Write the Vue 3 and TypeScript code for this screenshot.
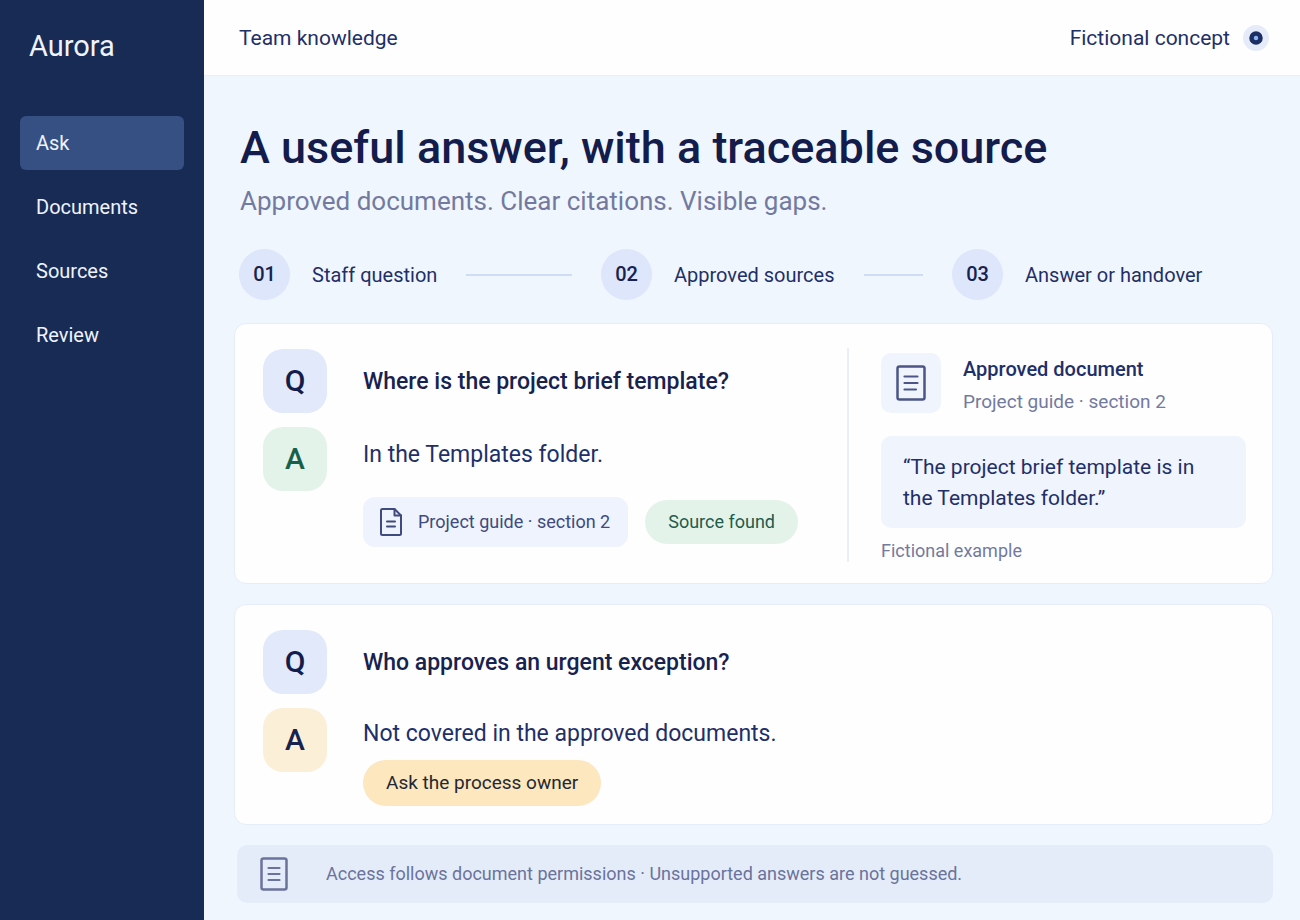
<script setup lang="ts">
interface NavItem {
  label: string
  active: boolean
}

interface Step {
  number: string
  label: string
}

const navItems: NavItem[] = [
  { label: 'Ask', active: true },
  { label: 'Documents', active: false },
  { label: 'Sources', active: false },
  { label: 'Review', active: false },
]

const steps: Step[] = [
  { number: '01', label: 'Staff question' },
  { number: '02', label: 'Approved sources' },
  { number: '03', label: 'Answer or handover' },
]
</script>

<template>
  <div class="app">
    <aside class="sidebar">
      <div class="brand">Aurora</div>
      <nav class="nav" aria-label="Main">
        <a
          v-for="item in navItems"
          :key="item.label"
          href="#"
          class="nav-link"
          :class="{ active: item.active }"
          :aria-current="item.active ? 'page' : undefined"
        >{{ item.label }}</a>
      </nav>
    </aside>

    <div class="main">
      <header class="topbar">
        <span>Team knowledge</span>
        <div class="topbar-right">
          <span>Fictional concept</span>
          <button type="button" class="dot" aria-label="Account">
            <svg viewBox="0 0 26 26" width="26" height="26" aria-hidden="true">
              <circle cx="13" cy="13" r="13" fill="#e6ebfa" />
              <circle cx="13" cy="13" r="4.500" fill="#8fb4f0" stroke="#1b2f66" stroke-width="4.500" />
            </svg>
          </button>
        </div>
      </header>

      <main class="content">
        <div class="intro">
          <h1>A useful answer, with a traceable source</h1>
          <p>Approved documents. Clear citations. Visible gaps.</p>
        </div>

        <ol class="steps">
          <li v-for="step in steps" :key="step.number" class="step">
            <span class="step-number">{{ step.number }}</span>
            <span class="step-label">{{ step.label }}</span>
          </li>
        </ol>

        <section class="card with-source">
          <div class="thread">
            <div class="row">
              <span class="badge question">Q</span>
              <h2 class="question-text">Where is the project brief template?</h2>
            </div>
            <div class="row">
              <span class="badge found">A</span>
              <div class="answer">
                <p class="answer-text">In the Templates folder.</p>
                <div class="chips">
                  <a href="#" class="source-chip">
                    <svg viewBox="0 0 24 30" width="24" height="30" fill="none" stroke="currentColor" stroke-width="2" stroke-linecap="round" stroke-linejoin="round" aria-hidden="true">
                      <path d="M3.500 2H15.500L22 8.500V26.500Q22 28 20.500 28H3.500Q2 28 2 26.500V3.500Q2 2 3.500 2Z" />
                      <path d="M15.500 2V8.500H22M8 14.500H16M8 19.500H16" />
                    </svg>
                    <span>Project guide · section 2</span>
                  </a>
                  <span class="status">Source found</span>
                </div>
              </div>
            </div>
          </div>

          <aside class="source">
            <div class="source-head">
              <span class="source-icon">
                <svg viewBox="0 0 32 38" width="32" height="38" fill="none" stroke="currentColor" stroke-linecap="round" aria-hidden="true">
                  <rect x="2.500" y="2.500" width="27" height="33" rx="2" stroke-width="2.500" />
                  <path d="M9.500 12.500H22.500M9.500 19H22.500M9.500 25.500H21" stroke-width="2.200" />
                </svg>
              </span>
              <div>
                <h3>Approved document</h3>
                <p class="muted">Project guide · section 2</p>
              </div>
            </div>
            <blockquote>“The project brief template is in the Templates folder.”</blockquote>
            <p class="muted example">Fictional example</p>
          </aside>
        </section>

        <section class="card">
          <div class="thread compact">
            <div class="row">
              <span class="badge question">Q</span>
              <h2 class="question-text">Who approves an urgent exception?</h2>
            </div>
            <div class="row">
              <span class="badge gap">A</span>
              <div class="answer">
                <p class="answer-text">Not covered in the approved documents.</p>
                <button type="button" class="handover">Ask the process owner</button>
              </div>
            </div>
          </div>
        </section>

        <footer class="notice">
          <svg viewBox="0 0 30 36" width="30" height="36" fill="none" stroke="currentColor" stroke-linecap="round" aria-hidden="true">
            <rect x="2.500" y="2.500" width="25" height="31" rx="2" stroke-width="2.500" />
            <path d="M9.500 12H20.500M9.500 18H20.500M9.500 24H20.500" stroke-width="2.200" />
          </svg>
          <span>Access follows document permissions · Unsupported answers are not guessed.</span>
        </footer>
      </main>
    </div>
  </div>
</template>

<style>
body {
  margin: 0;
}
</style>

<style scoped>
.app {
  display: grid;
  grid-template-columns: 204px minmax(0, 1fr);
  min-height: 100vh;
  background: #f0f6fe;
  color: #1f2f68;
  font-family: Roboto, "Liberation Sans", sans-serif;
  font-size: 20px;
  line-height: 30px;
}

.app *,
.app {
  box-sizing: border-box;
}

h1,
h2,
h3,
p,
ol,
blockquote {
  margin: 0;
  padding: 0;
}

svg {
  display: block;
  flex: none;
}

.sidebar {
  padding: 26px 20px;
  background: #182b54;
  color: #eef3fd;
}

.brand {
  padding-left: 9px;
  font-size: 29px;
  line-height: 40px;
}

.nav {
  display: grid;
  gap: 10px;
  margin-top: 50px;
}

.nav-link {
  padding: 0 16px;
  border-radius: 6px;
  color: inherit;
  line-height: 54px;
  text-decoration: none;
}

.nav-link.active {
  background: #365084;
}

.topbar {
  display: flex;
  align-items: center;
  justify-content: space-between;
  height: 76px;
  padding: 0 31px 0 35px;
  border-bottom: 1px solid #e9eff9;
  background: #fefefe;
  font-size: 21px;
}

.topbar-right {
  display: flex;
  align-items: center;
  gap: 13px;
}

.dot {
  padding: 0;
  border: 0;
  background: none;
}

.content {
  padding: 42px 27px 16px 30px;
}

.intro {
  padding-left: 6px;
}

h1 {
  color: #131c4b;
  font-size: 45px;
  font-weight: 500;
  line-height: 60px;
}

.intro p {
  margin-top: 3px;
  color: #737a9f;
  font-size: 26px;
  line-height: 40px;
}

.steps {
  display: grid;
  grid-template-columns: 362fr 351fr 321fr;
  margin: 28px 0 23px;
  padding-left: 5px;
  list-style: none;
}

.step {
  display: flex;
  align-items: center;
}

.step-number {
  width: 51px;
  margin-right: 22px;
  border-radius: 50%;
  background: #dde6fb;
  color: #17224f;
  font-weight: 500;
  line-height: 51px;
  text-align: center;
}

.step:not(:last-child)::after {
  content: "";
  flex: 1;
  height: 2px;
  margin: 0 29px;
  background: #d0dbf5;
}

.card {
  margin-bottom: 20px;
  border: 1px solid #e6edf9;
  border-radius: 12px;
  background: #fefefe;
}

.with-source {
  display: grid;
  grid-template-columns: minmax(0, 612fr) minmax(0, 425fr);
}

.thread {
  display: grid;
  align-content: start;
  gap: 12px;
  padding: 25px 28px 36px;
}

.row {
  display: flex;
  gap: 36px;
}

.badge {
  flex: none;
  width: 64px;
  height: 64px;
  border-radius: 20px;
  font-size: 30px;
  font-weight: 500;
  line-height: 64px;
  text-align: center;
}

.question {
  background: #e1e9fa;
  color: #131c4b;
}

.found {
  background: #e4f3e9;
  color: #17604a;
}

.gap {
  background: #fcefd8;
  color: #17224f;
}

.question-text {
  color: #17224f;
  font-size: 23px;
  font-weight: 500;
  line-height: 66px;
}

.answer-text {
  font-size: 23px;
  line-height: 56px;
}

.chips {
  display: flex;
  align-items: center;
  gap: 17px;
  margin-top: 14px;
}

.source-chip {
  display: flex;
  align-items: center;
  gap: 15px;
  height: 50px;
  padding: 0 18px 0 16px;
  border-radius: 12px;
  background: #eef3fd;
  color: #3f4a7d;
  font-size: 18px;
  text-decoration: none;
  white-space: nowrap;
}

.status {
  padding: 0 23px;
  border-radius: 22px;
  background: #e4f3e9;
  color: #1d5c4c;
  font-size: 18px;
  line-height: 44px;
  white-space: nowrap;
}

.source {
  margin: 24px 26px 21px 0;
  padding: 5px 0 0 32px;
  border-left: 2px solid #e8effa;
}

.source-head {
  display: flex;
  gap: 22px;
}

.source-icon {
  display: grid;
  place-items: center;
  width: 60px;
  height: 60px;
  border-radius: 10px;
  background: #eff4fd;
  color: #4b5687;
}

h3 {
  font-size: 20px;
  font-weight: 500;
  line-height: 32px;
}

.muted {
  color: #737a9f;
  font-size: 19px;
  line-height: 34px;
}

blockquote {
  margin-top: 17px;
  padding: 16px 22px 14px;
  border-radius: 10px;
  background: #eff4fd;
  font-size: 21px;
  line-height: 31px;
}

.example {
  margin-top: 12px;
  font-size: 18px;
  line-height: 22px;
}

.compact {
  padding-bottom: 18px;
}

.compact .answer-text {
  line-height: 52px;
}

.handover {
  display: block;
  height: 46px;
  padding: 0 23px;
  border: 0;
  border-radius: 23px;
  background: #fce7bf;
  color: #242832;
  font: inherit;
  font-size: 19px;
}

.notice {
  display: flex;
  align-items: center;
  gap: 37px;
  height: 58px;
  margin-left: 3px;
  padding: 0 22px;
  border-radius: 10px;
  background: #e5ecf9;
  color: #6a739c;
  font-size: 18px;
}
</style>
